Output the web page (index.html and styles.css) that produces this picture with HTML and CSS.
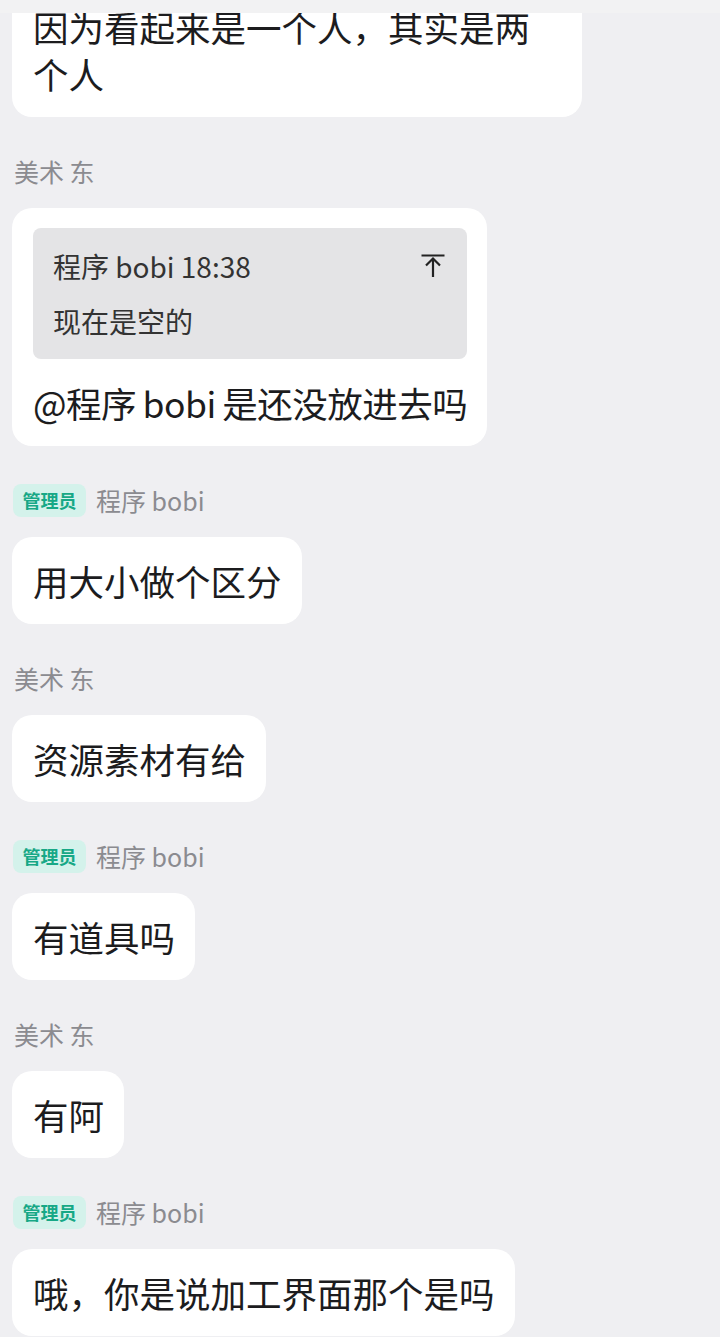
FILE: index.html
```html
<!DOCTYPE html>
<html lang="zh-CN">
<head>
    <meta charset="UTF-8">
    <title>群聊</title>
    <link rel="stylesheet" href="styles.css">
</head>
<body>
    <div class="topbar"></div>

    <div class="chat">
        <div class="msg first">
            <div class="bubble">因为看起来是一个人，其实是两个人</div>
        </div>

        <div class="msg">
            <div class="sender"><span class="name">美术 东</span></div>
            <div class="bubble">
                <div class="quote">
                    <div class="quote-head">
                        <span>程序 bobi 18:38</span>
                        <svg class="quote-icon" viewBox="0 0 24 24" width="24" height="24">
                            <path d="M0.5 1.5H23.5M12 23V5M5 11.5L12 4.5L19 11.5" fill="none" stroke="#222" stroke-width="2.2"/>
                        </svg>
                    </div>
                    <div class="quote-text">现在是空的</div>
                </div>
                <div class="reply">@程序 bobi 是还没放进去吗</div>
            </div>
        </div>

        <div class="msg">
            <div class="sender"><span class="badge">管理员</span><span class="name">程序 bobi</span></div>
            <div class="bubble">用大小做个区分</div>
        </div>

        <div class="msg">
            <div class="sender"><span class="name">美术 东</span></div>
            <div class="bubble">资源素材有给</div>
        </div>

        <div class="msg">
            <div class="sender"><span class="badge">管理员</span><span class="name">程序 bobi</span></div>
            <div class="bubble">有道具吗</div>
        </div>

        <div class="msg">
            <div class="sender"><span class="name">美术 东</span></div>
            <div class="bubble">有阿</div>
        </div>

        <div class="msg">
            <div class="sender"><span class="badge">管理员</span><span class="name">程序 bobi</span></div>
            <div class="bubble">哦，你是说加工界面那个是吗</div>
        </div>
    </div>
</body>
</html>
```

FILE: styles.css
```css
body {
    margin: 0;
    height: 1337px;
    overflow: hidden;
    background: #efeff2;
    font-family: "Noto Sans CJK SC", "Noto Sans", sans-serif;
    color: #1c1c1e;
}
.topbar {
    position: absolute;
    top: 0;
    left: 0;
    right: 0;
    height: 13px;
    background: #f2f2f3;
    z-index: 2;
}
.chat {
    padding: 0 12px;
}
.msg {
    margin-top: 37px;
    display: flex;
    flex-direction: column;
    align-items: flex-start;
}
.msg.first {
    margin-top: -17px;
}
.sender {
    display: flex;
    align-items: center;
    gap: 10px;
    height: 34px;
    margin-bottom: 20px;
}
.name {
    font-size: 25px;
    line-height: 34px;
    color: #8b8b90;
    padding-left: 2px;
}
.badge + .name {
    padding-left: 0;
}
.badge {
    background: #d4f2eb;
    color: #17a886;
    font-size: 18px;
    font-weight: bold;
    line-height: 33px;
    height: 33px;
    padding: 0 9.5px;
    border-radius: 8px;
    margin-left: 1px;
}
.bubble {
    background: #fff;
    border-radius: 20px;
    padding: 20px 20px 20px 21px;
    max-width: 529px;
    font-size: 35.5px;
    line-height: 47px;
}
.quote {
    background: #e4e4e6;
    border-radius: 8px;
    padding: 19px 22px 19px 20px;
    margin-bottom: 20px;
    font-size: 28px;
    line-height: 38px;
    color: #333;
}
.quote-head {
    display: flex;
    justify-content: space-between;
    align-items: center;
    margin-bottom: 17px;
}
.quote-icon {
    display: block;
}
.reply {
    word-spacing: -1px;
    letter-spacing: -0.5px;
}
```
